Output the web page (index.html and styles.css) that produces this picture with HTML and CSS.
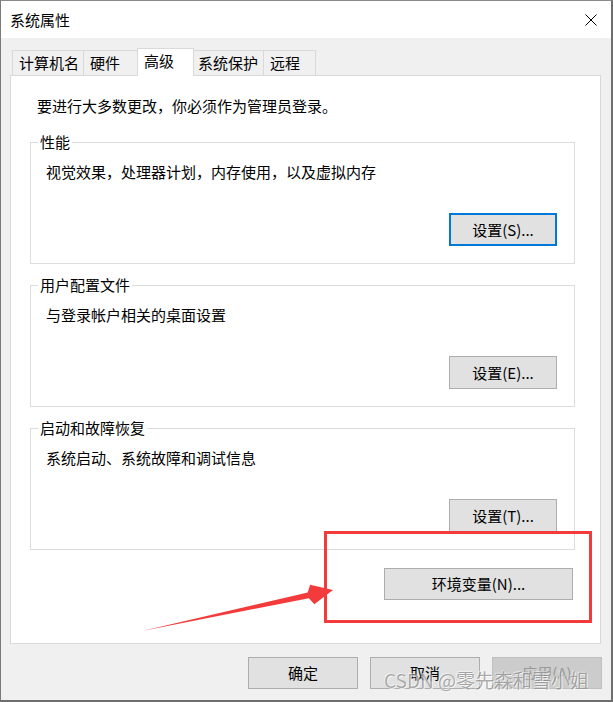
FILE: index.html
```html
<!DOCTYPE html>
<html lang="zh-CN">
<head>
<meta charset="utf-8">
<title>系统属性</title>
<link rel="stylesheet" href="styles.css">
</head>
<body>
<div class="window">
  <div class="titlebar">
    <span class="title">系统属性</span>
    <svg class="close" width="12" height="12" viewBox="0 0 12 12" aria-hidden="true">
      <path d="M0.5 0.5 L11.5 11.5 M11.5 0.5 L0.5 11.5" stroke="#000" stroke-width="1" fill="none"/>
    </svg>
  </div>
  <div class="body">
    <div class="tabs">
      <div class="tab tab-1">计算机名</div>
      <div class="tab tab-2">硬件</div>
      <div class="tab tab-3 tab-active">高级</div>
      <div class="tab tab-4">系统保护</div>
      <div class="tab tab-5">远程</div>
    </div>
    <div class="panel">
      <p class="intro">要进行大多数更改，你必须作为管理员登录。</p>
      <fieldset class="group">
        <legend>性能</legend>
        <p class="desc">视觉效果，处理器计划，内存使用，以及虚拟内存</p>
        <div class="actions"><button class="btn btn-group btn-focus">设置(S)...</button></div>
      </fieldset>
      <fieldset class="group">
        <legend>用户配置文件</legend>
        <p class="desc">与登录帐户相关的桌面设置</p>
        <div class="actions"><button class="btn btn-group">设置(E)...</button></div>
      </fieldset>
      <fieldset class="group">
        <legend>启动和故障恢复</legend>
        <p class="desc">系统启动、系统故障和调试信息</p>
        <div class="actions"><button class="btn btn-group">设置(T)...</button></div>
      </fieldset>
      <div class="env-row"><button class="btn btn-env">环境变量(N)...</button></div>
    </div>
    <div class="footer">
      <button class="btn btn-footer">确定</button>
      <button class="btn btn-footer">取消</button>
      <button class="btn btn-footer btn-disabled">应用(A)</button>
    </div>
  </div>
  <svg class="annotation" width="613" height="702" viewBox="0 0 613 702" aria-hidden="true">
    <rect x="325.5" y="532.5" width="265" height="89" fill="none" stroke="#f43b3b" stroke-width="3"/>
    <polygon points="142,631 307.7,592.4 310.1,584.7 333,590 314.3,604.3 308.9,598.2" fill="#f43b3b"/>
  </svg>
  <div class="watermark">CSDN @零先森和雪小姐</div>
</div>
</body>
</html>
```

FILE: styles.css
```css
html, body {
  margin: 0;
  padding: 0;
  background: #ffffff;
}

body {
  font-family: "Noto Sans CJK SC", "Liberation Sans", sans-serif;
  font-size: 15px;
  color: #000;
}

.window {
  position: relative;
  box-sizing: border-box;
  width: 613px;
  height: 702px;
  border-top: 1px solid #8a8a8a;
  border-left: 1px solid #7a7a7a;
  border-right: 2px solid #6e6e6e;
  border-bottom: 2px solid #6e6e6e;
  display: flex;
  flex-direction: column;
  overflow: hidden;
}

.titlebar {
  height: 37px;
  flex: none;
  background: #ffffff;
  display: flex;
  align-items: center;
  padding-left: 9px;
}

.title {
  line-height: 20px;
}

.close {
  margin-left: auto;
  margin-right: 14px;
  display: block;
}

.body {
  flex: 1;
  background: #f0f0f0;
  padding: 10px 10px 11px 9px;
  display: flex;
  flex-direction: column;
}

.tabs {
  height: 27px;
  display: flex;
  align-items: flex-end;
  padding-left: 2px;
  flex: none;
}

.tab {
  box-sizing: border-box;
  height: 25px;
  border: 1px solid #d9d9d9;
  border-bottom: none;
  background: #f0f0f0;
  padding: 2px 0 0 6px;
  line-height: 20px;
  white-space: nowrap;
  margin-left: -1px;
}

.tab-1 { width: 72px; margin-left: 0; }
.tab-2 { width: 55px; }
.tab-3 { width: 57px; }
.tab-4 { width: 71px; padding-left: 4px; }
.tab-5 { width: 53px; }

.tab-active {
  height: 28px;
  background: #ffffff;
  margin-bottom: -1px;
  position: relative;
  z-index: 1;
  padding-top: 2px;
}

.panel {
  flex: 1;
  box-sizing: border-box;
  background: #ffffff;
  border: 1px solid #d9d9d9;
  padding: 20px 25px 0 19px;
  display: flex;
  flex-direction: column;
}

.intro {
  margin: 0 0 16px 7px;
  line-height: 20px;
}

.group {
  margin: 0;
  border: 1px solid #dcdcdc;
  padding: 0 17px 17px 7px;
  min-width: 0;
}

.group + .group {
  margin-top: 11px;
}

.group legend {
  padding: 0 2px;
  line-height: 20px;
}

.desc {
  margin: 0;
  padding: 10px 0 0 8px;
  line-height: 20px;
}

.actions {
  display: flex;
  justify-content: flex-end;
  margin-top: 31px;
}

.btn {
  box-sizing: border-box;
  font-family: "Noto Sans CJK SC", "Liberation Sans", sans-serif;
  font-size: 15px;
  line-height: 20px;
  color: #000;
  background: #e1e1e1;
  border: 1px solid #adadad;
  padding: 0;
  margin: 0;
  text-align: center;
}

.btn-group {
  width: 108px;
  height: 33px;
}

.btn-focus {
  border: 2px solid #0078d7;
}

.env-row {
  display: flex;
  justify-content: flex-end;
  margin-top: 18px;
  padding-right: 2px;
}

.btn-env {
  width: 189px;
  height: 32px;
}

.footer {
  flex: none;
  margin-top: 13px;
  margin-right: -1px;
  display: flex;
  justify-content: flex-end;
  gap: 12px;
}

.btn-footer {
  width: 110px;
  height: 32px;
}

.btn-disabled {
  background: #cccccc;
  border-color: #bfbfbf;
  color: #9a9a9a;
}

.annotation {
  position: absolute;
  left: -1px;
  top: -1px;
  pointer-events: none;
}

.watermark {
  position: absolute;
  left: 383px;
  top: 667px;
  font-size: 19px;
  line-height: 24px;
  white-space: nowrap;
  color: rgba(120, 120, 120, 0.6);
  text-shadow: 1px 1px 0 rgba(255, 255, 255, 0.7), -1px -1px 0 rgba(255, 255, 255, 0.5);
  pointer-events: none;
}
```
